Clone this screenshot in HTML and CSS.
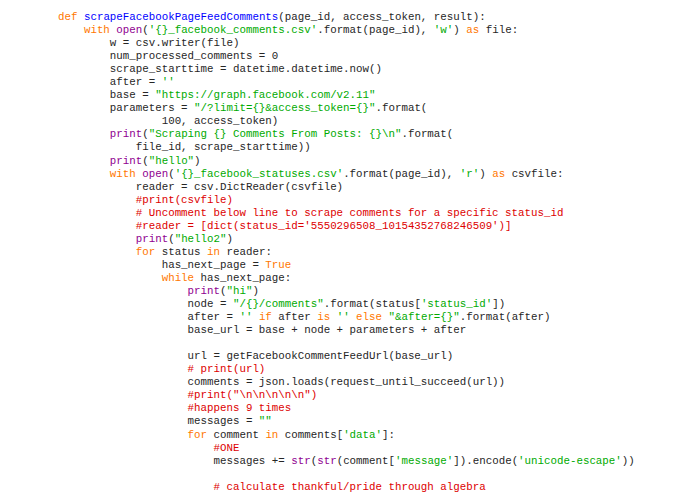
FILE: index.html
```html
<!DOCTYPE html>
<html>
<head>
<meta charset="utf-8">
<link rel="stylesheet" href="styles.css">
</head>
<body>
<div class="code">
<div class="ln"><span class="kw">def</span> <span class="fn">scrapeFacebookPageFeedComments</span>(page_id, access_token, result):</div>
<div class="ln">    <span class="kw">with</span> <span class="bi">open</span>(<span class="st">'{}_facebook_comments.csv'</span>.format(page_id), <span class="st">'w'</span>) <span class="kw">as</span> file:</div>
<div class="ln">        w = csv.writer(file)</div>
<div class="ln">        num_processed_comments = 0</div>
<div class="ln">        scrape_starttime = datetime.datetime.now()</div>
<div class="ln">        after = <span class="st">''</span></div>
<div class="ln">        base = <span class="st">"https://graph.facebook.com/v2.11"</span></div>
<div class="ln">        parameters = <span class="st">"/?limit={}&amp;access_token={}"</span>.format(</div>
<div class="ln">                100, access_token)</div>
<div class="ln">        <span class="bi">print</span>(<span class="st">"Scraping {} Comments From Posts: {}\n"</span>.format(</div>
<div class="ln">            file_id, scrape_starttime))</div>
<div class="ln">        <span class="bi">print</span>(<span class="st">"hello"</span>)</div>
<div class="ln">        <span class="kw">with</span> <span class="bi">open</span>(<span class="st">'{}_facebook_statuses.csv'</span>.format(page_id), <span class="st">'r'</span>) <span class="kw">as</span> csvfile:</div>
<div class="ln">            reader = csv.DictReader(csvfile)</div>
<div class="ln">            <span class="cm">#print(csvfile)</span></div>
<div class="ln">            <span class="cm"># Uncomment below line to scrape comments for a specific status_id</span></div>
<div class="ln">            <span class="cm">#reader = [dict(status_id='5550296508_10154352768246509')]</span></div>
<div class="ln">            <span class="bi">print</span>(<span class="st">"hello2"</span>)</div>
<div class="ln">            <span class="kw">for</span> status <span class="kw">in</span> reader:</div>
<div class="ln">                has_next_page = <span class="kw">True</span></div>
<div class="ln">                <span class="kw">while</span> has_next_page:</div>
<div class="ln">                    <span class="bi">print</span>(<span class="st">"hi"</span>)</div>
<div class="ln">                    node = <span class="st">"/{}/comments"</span>.format(status[<span class="st">'status_id'</span>])</div>
<div class="ln">                    after = <span class="st">''</span> <span class="kw">if</span> after <span class="kw">is</span> <span class="st">''</span> <span class="kw">else</span> <span class="st">"&amp;after={}"</span>.format(after)</div>
<div class="ln">                    base_url = base + node + parameters + after</div>
<div class="ln"></div>
<div class="ln">                    url = getFacebookCommentFeedUrl(base_url)</div>
<div class="ln">                    <span class="cm"># print(url)</span></div>
<div class="ln">                    comments = json.loads(request_until_succeed(url))</div>
<div class="ln">                    <span class="cm">#print("\n\n\n\n\n")</span></div>
<div class="ln">                    <span class="cm">#happens 9 times</span></div>
<div class="ln">                    messages = <span class="st">""</span></div>
<div class="ln">                    <span class="kw">for</span> comment <span class="kw">in</span> comments[<span class="st">'data'</span>]:</div>
<div class="ln">                        <span class="cm">#ONE</span></div>
<div class="ln">                        messages += <span class="bi">str</span>(<span class="bi">str</span>(comment[<span class="st">'message'</span>]).encode(<span class="st">'unicode-escape'</span>))</div>
<div class="ln"></div>
<div class="ln">                        <span class="cm"># calculate thankful/pride through algebra</span></div>
</div>
</body>
</html>
```

FILE: styles.css
```css
html, body {
  margin: 0;
  padding: 0;
  background: #ffffff;
}

body {
  padding: 11px 0 0 58px;
}

.code {
  display: flex;
  flex-direction: column;
  font-family: "Liberation Mono", "DejaVu Sans Mono", monospace;
  font-size: 10.8px;
  color: #262626;
}

.ln {
  height: 13.06px;
  line-height: 13.06px;
  white-space: pre;
}

.kw { color: #ff7700; }
.fn { color: #0000ff; }
.bi { color: #900090; }
.st { color: #00aa00; }
.cm { color: #dd0000; }
```
